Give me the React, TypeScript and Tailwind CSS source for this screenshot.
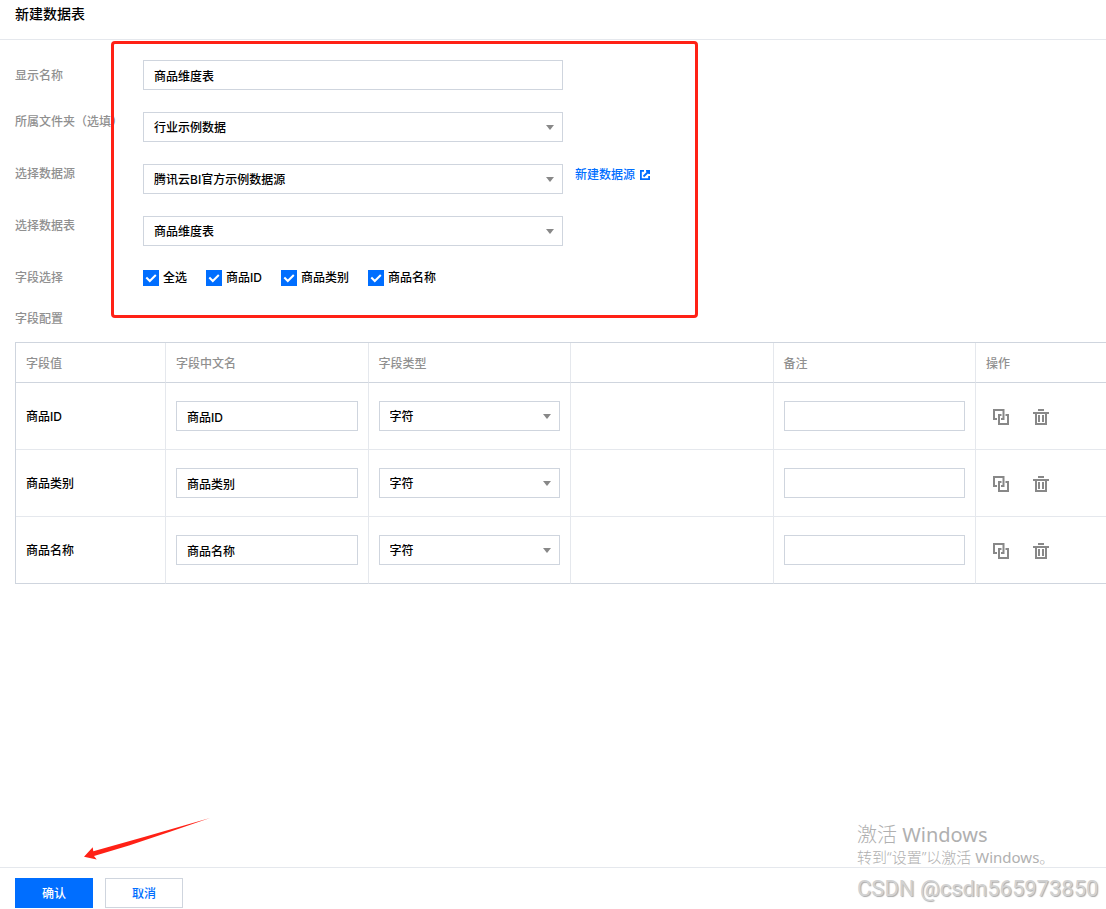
import { useState } from "react";
import type { SelectHTMLAttributes } from "react";

const fields = [
  { id: "pid", name: "商品ID" },
  { id: "category", name: "商品类别" },
  { id: "title", name: "商品名称" },
];

const columns = ["字段值", "字段中文名", "字段类型", "", "备注", "操作"];

const boxClass =
  "block w-full h-[30px] border border-[#cfd5de] bg-white px-[10px] text-xs font-medium text-black outline-none focus:border-[#006eff]";

const CopyIcon = () => (
  <svg width="16" height="16" viewBox="0 0 16 16" fill="none" stroke="#888" strokeWidth="2">
    <path d="M4 10H1V1h9.5v9H8" />
    <path d="M8.5 6H6v9h9V6h-2.5" />
  </svg>
);

const TrashIcon = () => (
  <svg width="16" height="16" viewBox="0 0 16 16" fill="#888">
    <path d="M5 0h6v2H5zM0 3h16v2h-2v11H2V5H0zM4 5v9h8V5z" fillRule="evenodd" />
    <path d="M5 6h2v7H5zM9 6h2v7H9z" />
  </svg>
);

const LinkIcon = () => (
  <svg width="10" height="10" viewBox="0 0 10 10" fill="none" stroke="#006eff" strokeWidth="1.8">
    <path d="M4 .9H.9v8.2h8.2V6" />
    <path d="M3.5 6.5L8.5 1.5M6 .9h3.1V4" />
  </svg>
);

const Select = ({
  options,
  ...props
}: SelectHTMLAttributes<HTMLSelectElement> & { options: string[] }) => (
  <div className="relative w-full">
    <select {...props} className={`${boxClass} appearance-none pr-7 pt-[2px]`}>
      {options.map((option) => (
        <option key={option}>{option}</option>
      ))}
    </select>
    <svg
      className="absolute right-[9px] top-[13px] pointer-events-none"
      width="8"
      height="5"
      viewBox="0 0 8 5"
      fill="#888"
    >
      <path d="M0 0h8L4 5z" />
    </svg>
  </div>
);

const Checkbox = ({
  label,
  checked,
  onChange,
}: {
  label: string;
  checked: boolean;
  onChange: () => void;
}) => (
  <label className="relative flex items-center gap-1 font-medium text-black">
    <input
      type="checkbox"
      checked={checked}
      onChange={onChange}
      className="w-4 h-4 appearance-none border border-[#cfd5de] checked:border-[#006eff] checked:bg-[#006eff]"
    />
    {checked && (
      <svg
        className="absolute left-0 top-[2px] pointer-events-none"
        width="16"
        height="16"
        viewBox="0 0 16 16"
        fill="none"
        stroke="#fff"
        strokeWidth="2"
      >
        <path d="M3.3 7.5l3.5 3.5 6-6" />
      </svg>
    )}
    {label}
  </label>
);

const App = () => {
  const [name, setName] = useState("商品维度表");
  const [selected, setSelected] = useState(fields.map((field) => field.id));
  const allSelected = selected.length === fields.length;

  const toggle = (id: string) =>
    setSelected((prev) =>
      prev.includes(id) ? prev.filter((item) => item !== id) : [...prev, id]
    );

  return (
    <div className="relative min-h-screen flex flex-col overflow-hidden bg-white text-xs font-medium text-[#909090] font-['Inter','Noto_Sans_CJK_SC',sans-serif]">
      <header className="h-10 border-b border-[#e5e8ed] px-[15px] pt-1">
        <h1 className="text-sm leading-5 font-medium text-black">新建数据表</h1>
      </header>

      <main className="flex-1 pl-[15px] pt-5">
        <form className="flex flex-col gap-[22px]">
          <div className="flex">
            <label htmlFor="name" className="w-32 shrink-0 pt-[2px] leading-[28px]">
              显示名称
            </label>
            <div className="w-[420px]">
              <input
                id="name"
                value={name}
                onChange={(e) => setName(e.target.value)}
                className={boxClass}
              />
            </div>
          </div>
          <div className="flex">
            <label htmlFor="folder" className="w-32 shrink-0 leading-5 whitespace-nowrap">
              所属文件夹（选填）
            </label>
            <div className="w-[420px]">
              <Select id="folder" options={["行业示例数据"]} />
            </div>
          </div>
          <div className="flex">
            <label htmlFor="source" className="w-32 shrink-0 leading-5">
              选择数据源
            </label>
            <div className="w-[420px]">
              <Select id="source" options={["腾讯云BI官方示例数据源"]} />
            </div>
            <a
              href="#source"
              className="ml-3 h-[22px] flex items-center gap-[5px] text-[#006eff]"
            >
              新建数据源
              <LinkIcon />
            </a>
          </div>
          <div className="flex">
            <label htmlFor="table" className="w-32 shrink-0 leading-5">
              选择数据表
            </label>
            <div className="w-[420px]">
              <Select id="table" options={["商品维度表"]} />
            </div>
          </div>
          <div className="flex leading-5">
            <span className="w-32 shrink-0">字段选择</span>
            <div className="flex gap-[19px]">
              <Checkbox
                label="全选"
                checked={allSelected}
                onChange={() => setSelected(allSelected ? [] : fields.map((field) => field.id))}
              />
              {fields.map((field) => (
                <Checkbox
                  key={field.id}
                  label={field.name}
                  checked={selected.includes(field.id)}
                  onChange={() => toggle(field.id)}
                />
              ))}
            </div>
          </div>
        </form>

        <h2 className="mt-5 mb-3 leading-[22px] font-medium">字段配置</h2>

        <table className="w-full table-fixed border-separate border-spacing-0 border-l border-t border-[#cfd5de]">
          <colgroup>
            <col className="w-[150px]" />
            <col />
            <col />
            <col />
            <col />
            <col className="w-[130px]" />
          </colgroup>
          <thead>
            <tr className="h-10">
              {columns.map((column, idx) => (
                <th
                  key={idx}
                  className="border-b border-r last:border-r-0 border-b-[#cfd5de] border-r-[#e5e8ed] px-[10px] pt-[2px] text-left font-medium"
                >
                  {column}
                </th>
              ))}
            </tr>
          </thead>
          <tbody className="[&_td]:border-b [&_td]:border-r [&_td]:border-[#e5e8ed] [&_td]:px-[10px] [&_td:last-child]:border-r-0 [&_tr:last-child_td]:border-b-[#cfd5de]">
            {fields.map((field) => (
              <tr key={field.id} className="h-[67px]">
                <td className="pt-[2px] text-black">{field.name}</td>
                <td>
                  <input
                    aria-label="字段中文名"
                    defaultValue={field.name}
                    className={boxClass}
                  />
                </td>
                <td>
                  <Select aria-label="字段类型" options={["字符"]} />
                </td>
                <td></td>
                <td>
                  <input aria-label="备注" className={boxClass} />
                </td>
                <td className="pt-[2px]">
                  <div className="flex gap-[10px]">
                    <button
                      type="button"
                      aria-label="复制"
                      className="w-[30px] h-[30px] flex items-center justify-center"
                    >
                      <CopyIcon />
                    </button>
                    <button
                      type="button"
                      aria-label="删除"
                      className="w-[30px] h-[30px] flex items-center justify-center"
                    >
                      <TrashIcon />
                    </button>
                  </div>
                </td>
              </tr>
            ))}
          </tbody>
        </table>
      </main>

      <footer className="flex gap-3 border-t border-[#e5e8ed] px-[15px] pt-[10px] pb-px">
        <button type="button" className="w-[78px] h-[30px] pt-[2px] bg-[#006eff] text-white">
          确认
        </button>
        <button
          type="button"
          className="w-[78px] h-[30px] pt-[2px] border border-[#cfd5de] bg-white text-[#006eff]"
        >
          取消
        </button>
      </footer>

      {/* red markers drawn over the form and the confirm button */}
      <div className="absolute left-[111px] top-[41px] w-[587px] h-[277px] rounded border-3 border-[#ff2116] pointer-events-none" />
      <svg
        className="absolute left-[84px] bottom-[48px] pointer-events-none"
        width="128"
        height="44"
        viewBox="0 0 128 44"
        fill="#ff2116"
      >
        <path d="M0 39.7L8.7 30.3L9.3 34.2L60 20L126 1L86 14.8L45 28.5L10 39L12.7 42.6Z" />
      </svg>

      <div className="absolute right-1 bottom-[6px] w-[245px] whitespace-nowrap font-light text-[#b0b0b0] pointer-events-none font-['Noto_Sans','Noto_Sans_CJK_SC',sans-serif]">
        <p className="text-xl leading-6">
          激活 <span className="font-normal">Windows</span>
        </p>
        <p className="text-[15px] leading-5">
          转到“设置”以激活 <span className="font-normal">Windows</span>。
        </p>
        <p className="mt-2 text-[22px] leading-7 font-normal text-[#d2d2d2] font-['Roboto',sans-serif] [text-shadow:1px_1px_1px_#aaa]">
          CSDN @csdn565973850
        </p>
      </div>
    </div>
  );
};

export default App;
